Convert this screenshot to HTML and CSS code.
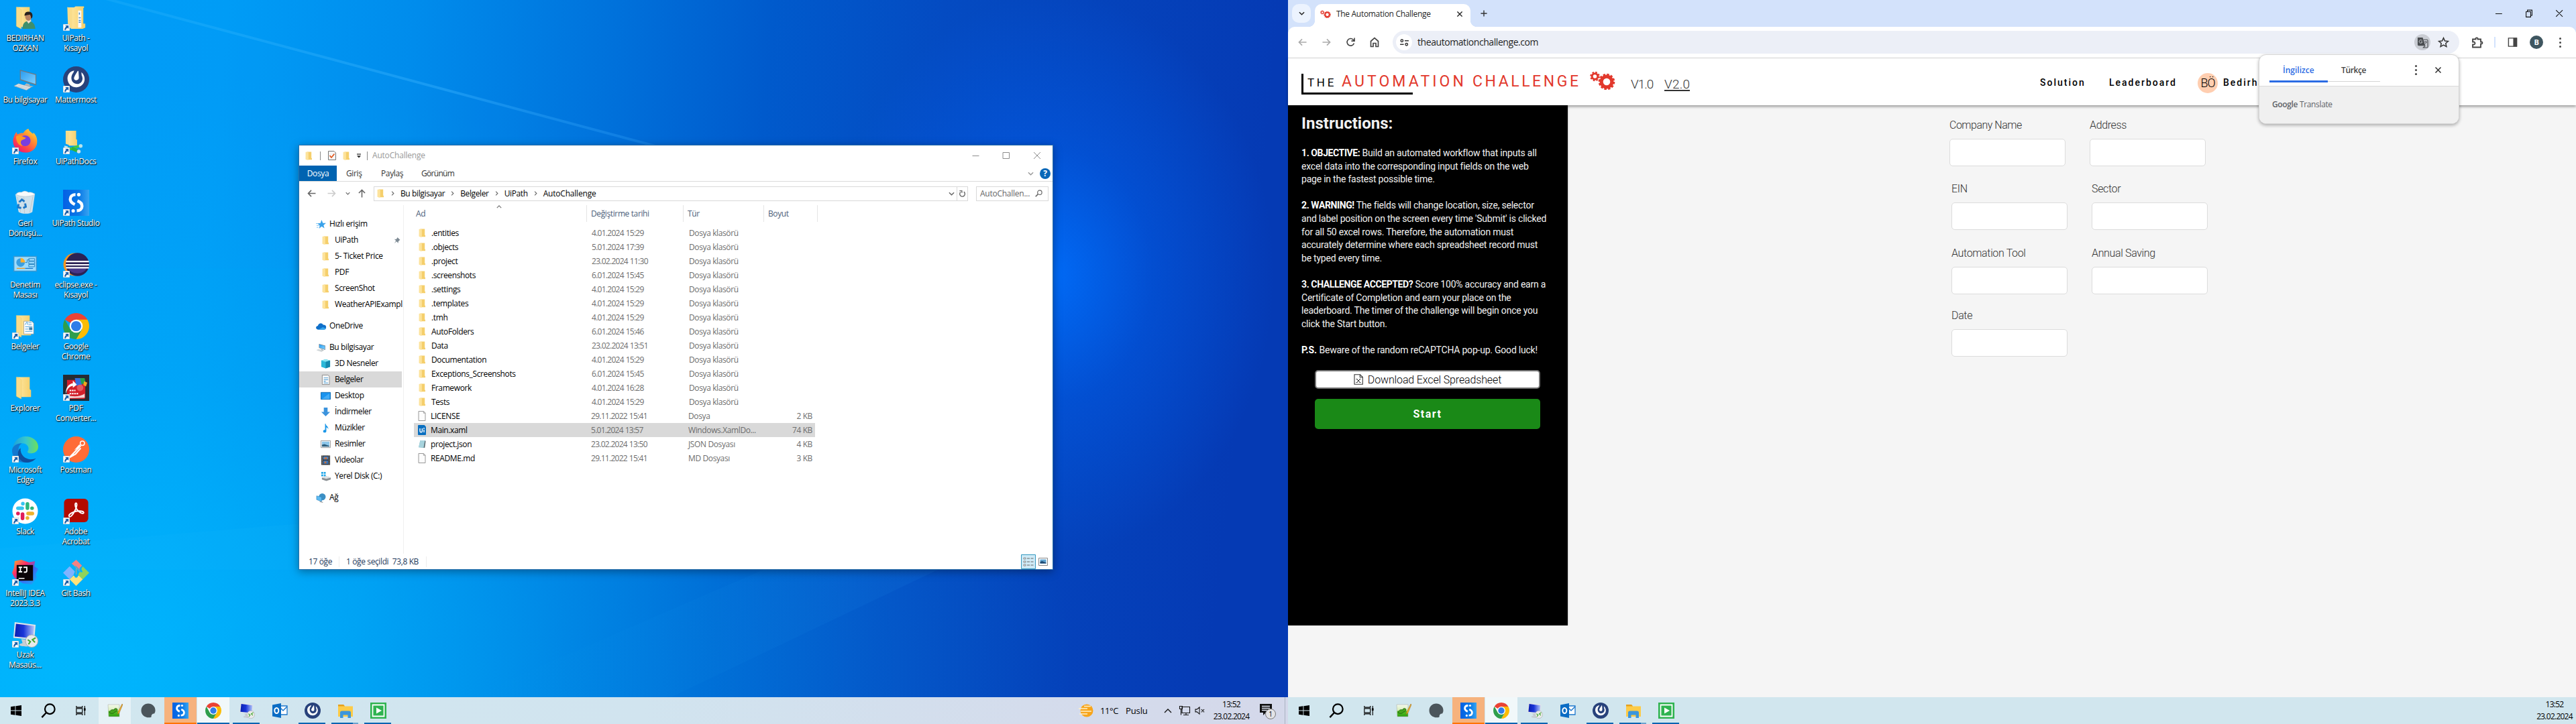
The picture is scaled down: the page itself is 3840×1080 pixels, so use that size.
FILE: index.html
```html
<!DOCTYPE html>
<html lang="tr">
<head>
<meta charset="utf-8">
<title>Desktop</title>
<link rel="stylesheet" href="styles.css">
</head>
<body>
<svg class="defs" width="0" height="0" aria-hidden="true">
  <defs>
    <linearGradient id="gFold" x1="0" x2="1"><stop offset="0" stop-color="#ffe9a6"/><stop offset="1" stop-color="#f6cf69"/></linearGradient>
    <linearGradient id="gScr" x1="0" y1="0" x2="1" y2="1"><stop offset="0" stop-color="#2a9df0"/><stop offset="1" stop-color="#7fd0ff"/></linearGradient>
    <linearGradient id="gFox" x1="1" y1="0" x2="0.2" y2="1"><stop offset="0" stop-color="#fff14a"/><stop offset=".35" stop-color="#ff9a2e"/><stop offset=".75" stop-color="#ff3f4c"/><stop offset="1" stop-color="#e3157d"/></linearGradient>
    <linearGradient id="gStu" x1="0" x2="1"><stop offset="0" stop-color="#0560e4"/><stop offset=".6" stop-color="#0a78e6"/><stop offset="1" stop-color="#37a5f2"/></linearGradient>
    <linearGradient id="gEdge" x1="0" y1="0.3" x2="1" y2="0.3"><stop offset="0" stop-color="#1ba0dc"/><stop offset=".5" stop-color="#36c6cf"/><stop offset="1" stop-color="#6fe05a"/></linearGradient>
    <linearGradient id="gRdp" x1="0" y1="0" x2="1" y2="0"><stop offset="0" stop-color="#0a1fb0"/><stop offset=".45" stop-color="#1a35d8"/><stop offset="1" stop-color="#b5c8fa"/></linearGradient>
    <linearGradient id="gGrn" x1="0" y1="0" x2="0" y2="1"><stop offset="0" stop-color="#f4f8ee"/><stop offset=".5" stop-color="#d8efb6"/><stop offset=".55" stop-color="#58c322"/><stop offset="1" stop-color="#2f9e12"/></linearGradient>
    <linearGradient id="gIj" x1="0" y1="0" x2="1" y2="1"><stop offset="0" stop-color="#f7b52c"/><stop offset=".35" stop-color="#fc2a6b"/><stop offset=".6" stop-color="#3a6cf4"/><stop offset="1" stop-color="#12b4f5"/></linearGradient>
  </defs>
  <symbol id="lnk" viewBox="0 0 10 10"><path d="M0 0h10v10H0z" fill="#fff" stroke="#9aa4ac" stroke-width=".8"/><path d="M3.2 2h5v5L6.600 5.500C5 6.300 4.300 7.300 4.200 8.700H2.200C2.200 6.300 3.200 4.800 4.800 3.800z" fill="#1c5fa8"/></symbol>
  <symbol id="fold" viewBox="0 0 10 13"><path d="M2.500.5H9.200V9.500L10 10.200V12.200H2z" fill="#f5cf6c"/><path d="M.6.8h3.200c.8 0 1 .5 1 1V12.800L1 12C.6 11.900.5 11.700.5 11.300z" fill="#fde39c"/></symbol>
  <symbol id="bigfold" viewBox="0 0 40 40"><path d="M7 3.500H27V22l2 1.500V34H14z" fill="url(#gFold)"/><path d="M6.500 3.500L13 6.500c.8.400 1 .8 1 1.700V37l-6.500-3.500c-.8-.4-1-.8-1-1.500z" fill="#f9dc8a" stroke="#efc75f" stroke-width=".5"/></symbol>
  <symbol id="userfold" viewBox="0 0 40 40"><use href="#bigfold" width="40" height="40"/><path d="M16 37c0-8 3-12 9-12s10 4 10.500 12z" fill="#3f8f6c"/><path d="M22 24l3 5 4-4-1-4h-5z" fill="#f0dcc8"/><ellipse cx="25" cy="18" rx="5" ry="6.500" fill="#b98462"/><path d="M19 17c0-6 4-6.500 7-6.300 4 .3 6 4 5 8-.5 1.500-1 2-2 2.500 0-3-.5-4.500-2-6-2.500.8-5 .8-8 1.800z" fill="#27201d"/></symbol>
  <symbol id="docsfold" viewBox="0 0 40 40"><path d="M7 4h10l2-1.500h13V5h-1v24h3v6l-4 2-18 0z" fill="url(#gFold)"/><path d="M23 9h5v26h-5z" fill="#f7f9fb"/><path d="M24 20h3M24 24h3M25 12v3M24 27h3" stroke="#4a8fcb" stroke-width="1.500"/><path d="M6.500 3.500L13 5.500c.8.400 1 .8 1 1.700V37l-6.500-3z" fill="#f9dc8a"/></symbol>
  <symbol id="netfold" viewBox="0 0 40 40"><path d="M4 4h16v13l1.500 1V27H9z" fill="url(#gFold)"/><path d="M4 4l5 2v20l-5-2z" fill="#f9dc8a"/><path d="M2 30l10 2 14-5" stroke="#3fc84a" stroke-width="4" fill="none"/><path d="M13 31l9 4" stroke="#2fb43e" stroke-width="5"/><circle cx="27" cy="27.500" r="2.800" fill="#b6e3ea"/><circle cx="24" cy="36" r="2.800" fill="#cfe3e6"/><path d="M2 27l5 1v4l-5-1z" fill="#bfe5f0"/></symbol>
  <symbol id="docfold" viewBox="0 0 40 40"><use href="#bigfold" width="40" height="40"/><path d="M18 12.500H30L33 15.500V32H18z" fill="#fff" stroke="#8a8f93" stroke-width=".7"/><path d="M20 18l2-4h1.500v4M25 15h5M25 18h5M20 21h11M20 28h11M20 24.500h5" stroke="#4b9fd8" stroke-width="1" fill="none"/><path d="M26 22h5v4h-5z" fill="#3d7ea8"/></symbol>
  <symbol id="pc" viewBox="0 0 40 40"><path d="M12 5L37 12V29L12 21z" fill="#6d7a84"/><path d="M13.300 7L35.700 13.200V27L13.300 19.800z" fill="url(#gScr)"/><path d="M22 26l5 1.500v2l6 1-6 2-9-3z" fill="#aeb6bb"/><path d="M3 30L10 26.500 29 32 22 36.500z" fill="#e4e8ea" stroke="#9aa3a9" stroke-width=".6"/><path d="M6 30l18 5M9 28.500l17 5" stroke="#a8b0b5" stroke-width=".7"/></symbol>
  <symbol id="mm" viewBox="0 0 40 40"><circle cx="20" cy="20" r="20" fill="#28427b"/><path d="M17 6.500C9.500 8 5.800 14 7 21c1.300 7 7 11.500 14 11 7-.6 12-6 12-12.500 0-4.500-1.800-8-5-10.500l.4 4.500c2.300 4.300 1.600 8.800-1.600 11.500-3.500 2.700-8.500 2.500-11.500-.6-4-4.300-3-11 .7-15.200z" fill="#fff"/><path d="M22.800 7c.4 0 .7.2.8 1l.6 9c.2 3-2 4.500-4.400 4.200-2.400-.3-3.800-2.500-2.700-4.900 1.400-3 3.600-6.600 5.200-9 .1-.2.3-.3.500-.3z" fill="#fff"/></symbol>
  <symbol id="fox" viewBox="0 0 40 40"><path d="M3 13c1-3 2-5 4-7 0 2 .6 3 1.500 3.800C12 8 14 7.500 17 7.800 19 4 22 2 25 1c1 4 4 5 7 8 .5-.6.600-1.500.4-2.300C38 12 39 18 38 24c-1.500 8-8.500 13.500-17.500 13.500C10 37.500 2 30 1.500 21c-.1-3 .3-5.500 1.500-8z" fill="url(#gFox)"/><circle cx="20" cy="19.500" r="8.300" fill="#7a3ee0"/><path d="M6 13c4-3 8-2 10 0 2 1 4 .8 5 2-1 2.500-5 2-7 4.500-1.500 2.500-.5 6 2.500 8-6-.5-10-5-10.500-14.500z" fill="#ff9824"/></symbol>
  <symbol id="bin" viewBox="0 0 40 40"><path d="M5 7l30-1-4 28c-4 3.500-16 3.500-21 0z" fill="#dfe6ea" opacity=".92"/><path d="M6 7c3-5 8-2 10-4 4-2 7 0 9 1 4-1 8 1 10 3-5 4-23 5-29 0z" fill="#f8fafb" stroke="#b4bfc6" stroke-width=".6"/><path d="M8 11l5 23M18 12l1 24M32 10l-5 25" stroke="#bcc7cd" stroke-width="1" fill="none"/><path d="M11 19l4-4 4 3M20 21l1 5-4 2M14 28l-5-1 1-5" fill="none" stroke="#1d78c8" stroke-width="3"/></symbol>
  <symbol id="stu" viewBox="0 0 40 40"><path d="M0 0h40v40H0z" fill="url(#gStu)"/><path d="M19 7.500c-5 0-8 3-8 7s3 6 7 8M22 17c4 1.500 7 4 7 8s-3 7-8 7" fill="none" stroke="#fff" stroke-width="4.600"/><circle cx="24" cy="7.500" r="2.700" fill="#fff"/><circle cx="15.500" cy="32.300" r="2.600" fill="#fff"/></symbol>
  <symbol id="cpl" viewBox="0 0 40 40"><path d="M2 7h36v24H2z" fill="#3c97cf"/><path d="M3.500 8.500h33v21h-33z" fill="#9bdcff"/><circle cx="13" cy="17" r="6.500" fill="#3a9fe0"/><path d="M13 17V10a7 7 0 0 1 7 7z" fill="#ffb02e"/><path d="M20 17h3v-4h4M25.500 11h9v3.500h-9zM25.500 15.500h9V19h-9zM25.500 20h9v3.500h-9z" stroke="#2b87c2" fill="none"/><path d="M7 26h13" stroke="#f29a1f" stroke-width="1.300"/><path d="M20 26h12" stroke="#1d78c8" stroke-width="1.300"/></symbol>
  <symbol id="ecl" viewBox="0 0 40 40"><circle cx="18" cy="20" r="17.500" fill="#f7941e"/><circle cx="22" cy="20" r="17.800" fill="#2c2255"/><path d="M8 26h28a15 12 0 0 1-28 0z" fill="#473788"/><path d="M4.500 15.500h35M4.200 20.500h35.600M4.500 25h35" stroke="#fff" stroke-width="2.200"/></symbol>
  <symbol id="chr" viewBox="0 0 40 40"><path d="M20 20L2.700 10A20 20 0 0 1 37.300 10z" fill="#ea4335"/><path d="M20 10H37.300A20 20 0 0 1 20 40L28.700 25z" fill="#fbbc05"/><path d="M2.700 10L11.300 25 28.700 25 20 40A20 20 0 0 1 2.700 10z" fill="#2f9e4c"/><circle cx="20" cy="20" r="10" fill="#fff"/><circle cx="20" cy="20" r="7.800" fill="#2f7de9"/></symbol>
  <symbol id="pdf" viewBox="0 0 40 40"><path d="M0 0h40v40H0z" fill="#262a33"/><path d="M6 8h22l6 5v21c0 2-1 3-3 3H9c-2 0-3-1-3-3z" fill="#d3202b"/><path d="M6 31c8 3 20 3 27-2v6l-25 1z" fill="#f0d5d5"/><path d="M18 5l9 0 2 10-9 2z" fill="#2f6fe0"/><path d="M26 5h7l2 9h-7z" fill="#22a04a"/><path d="M32 10l5 2-2 6-4-2z" fill="#f2a51f"/><path d="M4 30C4 20 8 14 15 13V9l6 6-6 5v-3c-6 1-9 5-11 13z" fill="#fff"/><circle cx="26" cy="20" r="5" fill="#e25a60"/><path d="M10 24h9M10 29h14" stroke="#fff" stroke-width="2" stroke-dasharray="2.500 1"/></symbol>
  <symbol id="edge" viewBox="0 0 40 40"><path d="M1 19C2 8 10 0 20.500 0 32 0 40 7.500 40 16c0 6-5 10-10.500 10-4.500 0-6-1.500-6-2.500 0-1 1.700-2 1.700-5 0-4.500-4.500-8-10-8C8 10.500 3 14 1 19z" fill="url(#gEdge)"/><path d="M0 22C0 15 7 10.500 15 10.500c-4 2.500-6 7-5 13C11.500 33 19 38 27 39 12 43 0 34 0 22z" fill="#1378cf"/><path d="M13 18c-1 10 7 17 15 17 4 0 7-1 8.500-1.500C33 38 27 40 22 40 12 39 8.500 31 9 25c.2-3 2-6 4-7z" fill="#0f4f9e"/></symbol>
  <symbol id="post" viewBox="0 0 40 40"><circle cx="20" cy="20" r="20" fill="#ff6c37"/><circle cx="29.500" cy="10.500" r="3.300" fill="none" stroke="#fff" stroke-width="1.500"/><path d="M27 14L10 32l9-5 8-9" fill="none" stroke="#fff" stroke-width="2.200"/><path d="M17 21l8-9 2 4z" fill="#fff"/></symbol>
  <symbol id="slack" viewBox="0 0 40 40"><circle cx="20" cy="20" r="19.500" fill="#fff"/><g stroke-width="5.600" stroke-linecap="round"><path d="M9 15.500h6.500M16.500 8.500v.1" stroke="#36c5f0"/><path d="M23.500 9v6.500M30.500 15.500h.1" stroke="#2eb67d"/><path d="M24.500 23.500H31M23.500 30.500v.1" stroke="#ecb22e"/><path d="M16 24.500V31M9 23.500h.1" stroke="#e01e5a"/></g></symbol>
  <symbol id="acro" viewBox="0 0 40 40"><rect x="1.500" y="1" width="37" height="36" rx="6" fill="#b30b00"/><path d="M9 27c0-3 7-6 12-7 5-.6 10-.5 10.500 2 .3 2-3 2-6-.5-4-3-7-8-7-11.500 0-3 2.500-3.500 2.500 0 0 5-5 14-8 17-2 2-4 2-4 0z" fill="none" stroke="#fff" stroke-width="2"/></symbol>
  <symbol id="ij" viewBox="0 0 40 40"><path d="M4 2l10-2 12 4 9-2-1 8 6 4-4 8 2 6-8 10-14-2-12-8L0 20l3-8z" fill="url(#gIj)"/><path d="M7 8h25v24H7z" fill="#0b0408"/><path d="M10 11.500h5.500M12.700 11.500v7M10 18.500h5.500M17.500 11.500h5v5.500q0 2-2 2h-2.500" stroke="#fff" stroke-width="1.900" fill="none"/><path d="M10 28.500h9" stroke="#fff" stroke-width="1.500"/></symbol>
  <symbol id="git" viewBox="0 0 40 40"><path d="M20 0l9 9-4 4 1 3-6-6-3-1-4-3z" fill="#f58282"/><path d="M0 20L10 10l8 8-2 5-6 7z" fill="#80b3ff"/><path d="M30 10l10 10-10 10-7-7 2-4 5 0-2-5z" fill="#8ed35a"/><path d="M20 40L10 30l6-6 4 3 4-3 6 6z" fill="#ffe27a"/><path d="M17 9l9 9M20 13v12" stroke="#c9a088" stroke-width="1"/><circle cx="20" cy="25" r="2.500" fill="#00b3fa"/></symbol>
  <symbol id="rdp" viewBox="0 0 40 40"><path d="M4 1L36 5 34 28 2 25z" fill="#dfe3e8"/><path d="M6 3.500L34 7 32 26 4 23z" fill="url(#gRdp)"/><path d="M14 27l10 1 1 6c4 1 6 3 2 4-6 1-16 0-16-2 0-2 3-2 5-3z" fill="#c8ced4"/><circle cx="30" cy="30" r="9.500" fill="#e9eaeb" stroke="#a9adb1"/><path d="M24 28l4 3-3 4M36 25l-5 3 4 4" stroke="#43a82c" stroke-width="2" fill="none"/></symbol>

  <symbol id="win" viewBox="0 0 16 16"><path d="M0 2.200L6.500 1.300V7.600H0zM7.400 1.200L16 0V7.600H7.400zM0 8.400H6.500V14.700L0 13.800zM7.400 8.400H16V16L7.400 14.800z"/></symbol>
  <symbol id="find" viewBox="0 0 24 24"><circle cx="14.500" cy="9.500" r="8" fill="none" stroke="#000" stroke-width="2.400"/><path d="M9 15L1.500 23" stroke="#000" stroke-width="2.600"/></symbol>
  <symbol id="task" viewBox="0 0 18 18"><path d="M1.500 1v2.500h10V1M1.500 17v-2.500h10V17M1.500 5.500h10v7h-10zM15.500 1v16" fill="none" stroke="#000" stroke-width="1.300"/><path d="M14 5h3v4h-3z"/></symbol>
  <symbol id="npp" viewBox="0 0 24 24"><path d="M2 3h17v18H3z" fill="url(#gGrn)" stroke="#a4aaa0" stroke-width=".5"/><path d="M4 15c1-4 4-5 7-4 0-3 5-3 5 0 0 2-2 3-4 3-2 3-5 3-8 1z" fill="#46a51d" stroke="#1d5a10" stroke-width=".8"/><path d="M23 2l-6 12-1 4 3-3L24 3z" fill="#f5b52c" stroke="#8a5a1a" stroke-width=".5"/></symbol>
  <symbol id="blob" viewBox="0 0 24 24"><path d="M12 1.500c6 0 10.500 4.500 10.500 10 0 2-.5 3.500-1.500 5-2-.5-4.500 1-4.500 4.500v.8C9 24 1.500 19.500 1.500 12 1.500 6 6 1.500 12 1.500z" fill="#4b555b"/></symbol>
  <symbol id="olk" viewBox="0 0 24 24"><path d="M11 5h12v13H11z" fill="#fff" stroke="#1c77cc" stroke-width="1.300"/><path d="M12 7l5 5 6-6" fill="none" stroke="#1c77cc" stroke-width="1.500"/><path d="M1 3.500L14 1v22L1 20.500z" fill="#0a6cc4"/><ellipse cx="7.300" cy="12" rx="3" ry="4" fill="none" stroke="#fff" stroke-width="2"/></symbol>
  <symbol id="exp" viewBox="0 0 24 24"><path d="M1 3h8l2 2.500h12V21H1z" fill="#fdcb47"/><path d="M1 3h8l2 2.500H1z" fill="#e5a01d"/><path d="M4 23v-8q0-2.500 2.500-2.500h11Q20 12.500 20 15v8h-4.500v-4.500h-7V23z" fill="#3c96dc"/></symbol>
  <symbol id="asst" viewBox="0 0 24 24"><path d="M0 0h24v24H0z" fill="#2fb350"/><path d="M3.500 3.500h17v17h-17z" fill="none" stroke="#fff" stroke-width="1.800"/><path d="M9 7.500l8 4.500-8 4.500z" fill="#fff"/></symbol>
  <symbol id="gears" viewBox="0 0 38 28"><g fill="none" stroke="#e2382c"><circle cx="7.500" cy="8" r="4.300" stroke-width="3"/><circle cx="7.500" cy="8" r="6.300" stroke-width="2" stroke-dasharray="2.600 2.350"/><circle cx="25" cy="16" r="7.900" stroke-width="5.200"/><circle cx="25" cy="16" r="11" stroke-width="2.600" stroke-dasharray="3.400 2.360"/></g></symbol>
  <symbol id="page" viewBox="0 0 12 15"><path d="M1 .5h7.500L11 3v11.500H1z" fill="#fcfcfc" stroke="#8d8d8d" stroke-width=".9"/><path d="M8.300.7V3.200H11" fill="none" stroke="#8d8d8d" stroke-width=".8"/></symbol>
  <symbol id="chev" viewBox="0 0 10 6"><path d="M1 1l4 4 4-4" fill="none" stroke="currentColor" stroke-width="1.600"/></symbol>
  <symbol id="x" viewBox="0 0 10 10"><path d="M.5.5l9 9M9.500.5l-9 9" fill="none" stroke="currentColor" stroke-width="1.700"/></symbol>
  <symbol id="arr" viewBox="0 0 14 12"><path d="M13.500 6H1.500M6.500 1L1.500 6l5 5" fill="none" stroke="currentColor" stroke-width="1.700"/></symbol>
</svg>

<main class="screens">
<section class="monitor">
  <div class="desktop">
    <svg class="wall" viewBox="0 0 1920 1080" preserveAspectRatio="none" aria-hidden="true">
      <defs>
        <linearGradient id="ray1" gradientUnits="userSpaceOnUse" x1="150" y1="0" x2="1000" y2="220"><stop offset="0" stop-color="#4cc4ff" stop-opacity=".15"/><stop offset=".6" stop-color="#3db4ff" stop-opacity=".4"/><stop offset="1" stop-color="#2f9cf5" stop-opacity=".3"/></linearGradient>
        <linearGradient id="ray2" x1="0" x2="1"><stop offset="0" stop-color="#20c4ff" stop-opacity="0"/><stop offset="1" stop-color="#2fb0ff" stop-opacity=".07"/></linearGradient>
      </defs>
      <path d="M150 -6L1000 222V226L150 -2z" fill="url(#ray1)"/>
      <path d="M150 0L1000 225V400L0 400V0z" fill="#18a4ff" opacity=".04"/>
      <path d="M0 818L460 780V850L0 850z" fill="#2fc8ff" opacity=".06"/>
      <path d="M700 1040L1140 849H1400L1000 1040z" fill="url(#ray2)"/>
    </svg>
    <div class="icons">
      <div class="ico"><i><svg><use href="#userfold"/></svg></i><b>BEDIRHAN<br>OZKAN</b></div>
      <div class="ico"><i><svg><use href="#pc"/></svg></i><b>Bu bilgisayar</b></div>
      <div class="ico"><i><svg><use href="#fox"/></svg><svg class="sc"><use href="#lnk"/></svg></i><b>Firefox</b></div>
      <div class="ico"><i><svg><use href="#bin"/></svg></i><b>Geri<br>Dönüşü...</b></div>
      <div class="ico"><i><svg><use href="#cpl"/></svg></i><b>Denetim<br>Masası</b></div>
      <div class="ico"><i><svg><use href="#docfold"/></svg><svg class="sc"><use href="#lnk"/></svg></i><b>Belgeler</b></div>
      <div class="ico"><i><svg><use href="#bigfold"/></svg></i><b>Explorer</b></div>
      <div class="ico"><i><svg><use href="#edge"/></svg><svg class="sc"><use href="#lnk"/></svg></i><b>Microsoft<br>Edge</b></div>
      <div class="ico"><i><svg><use href="#slack"/></svg><svg class="sc"><use href="#lnk"/></svg></i><b>Slack</b></div>
      <div class="ico"><i><svg><use href="#ij"/></svg><svg class="sc"><use href="#lnk"/></svg></i><b>IntelliJ IDEA<br>2023.3.3</b></div>
      <div class="ico"><i><svg><use href="#rdp"/></svg><svg class="sc"><use href="#lnk"/></svg></i><b>Uzak<br>Masaüs...</b></div>
      <div class="ico"><i><svg><use href="#docsfold"/></svg><svg class="sc"><use href="#lnk"/></svg></i><b>UiPath -<br>Kısayol</b></div>
      <div class="ico"><i><svg><use href="#mm"/></svg><svg class="sc"><use href="#lnk"/></svg></i><b>Mattermost</b></div>
      <div class="ico"><i><svg><use href="#netfold"/></svg><svg class="sc"><use href="#lnk"/></svg></i><b>UiPathDocs</b></div>
      <div class="ico"><i><svg><use href="#stu"/></svg><svg class="sc"><use href="#lnk"/></svg></i><b>UiPath Studio</b></div>
      <div class="ico"><i><svg><use href="#ecl"/></svg><svg class="sc"><use href="#lnk"/></svg></i><b>eclipse.exe -<br>Kısayol</b></div>
      <div class="ico"><i><svg><use href="#chr"/></svg><svg class="sc"><use href="#lnk"/></svg></i><b>Google<br>Chrome</b></div>
      <div class="ico"><i><svg><use href="#pdf"/></svg><svg class="sc"><use href="#lnk"/></svg></i><b>PDF<br>Converter...</b></div>
      <div class="ico"><i><svg><use href="#post"/></svg><svg class="sc"><use href="#lnk"/></svg></i><b>Postman</b></div>
      <div class="ico"><i><svg><use href="#acro"/></svg><svg class="sc"><use href="#lnk"/></svg></i><b>Adobe<br>Acrobat</b></div>
      <div class="ico"><i><svg><use href="#git"/></svg><svg class="sc"><use href="#lnk"/></svg></i><b>Git Bash</b></div>
    </div>

    <section class="window">
      <header class="titlebar">
        <svg class="f"><use href="#fold"/></svg><span class="vsep s1"></span>
        <svg class="chk" viewBox="0 0 12 14"><path d="M.5.5H9L11.500 3V13.500H.5z" fill="#f6f6f6" stroke="#777"/><path d="M2.500 7l2.500 3 4.500-5.500" fill="none" stroke="#e0561b" stroke-width="1.700"/></svg>
        <svg class="f f2"><use href="#fold"/></svg>
        <svg class="qa" viewBox="0 0 8 7"><path d="M1 1h6" stroke="#222" stroke-width="1.200"/><path d="M1 3.200h6L4 6.500z" fill="#222"/></svg>
        <span class="vsep s2"></span><span class="wtitle">AutoChallenge</span>
        <svg class="wc" viewBox="0 0 102 14"><path d="M.5 7.500h10M46 2.500h9.500v9H46zM92 2l10 10M102 2L92 12" fill="none" stroke="#8c8c8c"/></svg>
      </header>
      <nav class="ribbon"><span class="dosya">Dosya</span><span class="t1">Giriş</span><span class="t2">Paylaş</span><span class="t3">Görünüm</span>
        <svg class="rchev"><use href="#chev"/></svg><span class="help">?</span></nav>
      <div class="addr">
        <svg class="a1"><use href="#arr"/></svg><svg class="a2"><use href="#arr"/></svg><svg class="a3"><use href="#chev"/></svg><svg class="a4"><use href="#arr"/></svg>
        <div class="path"><svg class="pf"><use href="#fold"/></svg><svg class="sep p0"><use href="#chev"/></svg><span>Bu bilgisayar</span><svg class="sep"><use href="#chev"/></svg><span>Belgeler</span><svg class="sep"><use href="#chev"/></svg><span>UiPath</span><svg class="sep"><use href="#chev"/></svg><span class="ac">AutoChallenge</span>
          <svg class="pchev"><use href="#chev"/></svg><span class="ref"><svg viewBox="0 0 12 12"><path d="M3.200 3.200A4.200 4.200 0 1 0 8.500 2.900M1.500 1.200h3.800v3.500" fill="none" stroke="#666" stroke-width="1.500"/></svg></span></div>
        <div class="search"><span>AutoChallen...</span><svg viewBox="0 0 12 12"><circle cx="7.500" cy="4.500" r="3.500" fill="none" stroke="#666" stroke-width="1.300"/><path d="M5 7L.8 11.200" stroke="#666" stroke-width="1.800"/></svg></div>
      </div>
      <div class="panes">
        <ul class="tree">
          <li><svg viewBox="0 0 16 16"><path d="M9 1l2 5h5l-4 3.500 1.500 5L9 11.500 5 15l1-5-4-3.500h5z" fill="#3aa2ea"/><path d="M0 7h4M1 10h4M1 13h3" stroke="#7cc4f4"/></svg>Hızlı erişim</li>
          <li class="k"><svg class="f"><use href="#fold"/></svg>UiPath<svg class="pin" viewBox="0 0 12 12"><path d="M6.500.5l5 5-1.500.5-2 2.500V11L5 8 .8 11.500 4 7 1 4l3 .2L6 2z" fill="#7d8a94"/></svg></li>
          <li class="k"><svg class="f"><use href="#fold"/></svg>5- Ticket Price</li>
          <li class="k"><svg class="f"><use href="#fold"/></svg>PDF</li>
          <li class="k"><svg class="f"><use href="#fold"/></svg>ScreenShot</li>
          <li class="k"><svg class="f"><use href="#fold"/></svg>WeatherAPIExampl</li>
          <li class="g"><svg viewBox="0 0 16 16"><path d="M4 13.500C-1 13.500-1 8 3 7.500 4 3 9.500 2 11.500 6c4-.5 5.500 3 4.300 5.500-.6 1.400-1.500 2-3 2z" fill="#0f6fc9"/><path d="M4 13.500l7-4 4.800 2.300c-.6 1.300-1.500 1.700-3 1.700z" fill="#35a6ee"/></svg>OneDrive</li>
          <li class="g"><svg viewBox="0 0 40 40"><use href="#pc"/></svg>Bu bilgisayar</li>
          <li class="k"><svg viewBox="0 0 16 16"><path d="M1 3l7-2 7 2v10l-7 2.500L1 13z" fill="#2bb8d8"/><path d="M1 3l7-2 7 2-7 2z" fill="#8ae6f2"/><path d="M8 5l7-2v10l-7 2.500z" fill="#1489ae"/></svg>3D Nesneler</li>
          <li class="k on"><svg viewBox="0 0 16 16"><path d="M2.500.5h9l2.500 2v13H2.500z" fill="#f7f7f7" stroke="#8a8a8a"/><path d="M5 5h7M5 8h7M5 10.500h3M5 13h7" stroke="#4d9ed6" stroke-width="1.200"/></svg>Belgeler</li>
          <li class="k"><svg viewBox="0 0 16 16"><path d="M.5 2.500h15v11H.5z" fill="#1a93ee" stroke="#0d6ab0"/><path d="M2 13L14 4v9z" fill="#41acf7"/></svg>Desktop</li>
          <li class="k"><svg viewBox="0 0 16 16"><path d="M5 1h6v7h4l-7 7-7-7h4z" fill="#3b93dd"/></svg>İndirmeler</li>
          <li class="k"><svg viewBox="0 0 16 16"><path d="M8 1c0 4 5 4 4 9-.5-2-2-3-3-3v6c0 3-5 3-5 .5S6 11 7 11V1z" fill="#1b97e8"/></svg>Müzikler</li>
          <li class="k"><svg viewBox="0 0 16 16"><path d="M.5 2.500h15v11H.5z" fill="#fff" stroke="#999"/><path d="M2 4h12v8H2z" fill="#8cc6ea"/><path d="M2 9l4-1 8 3v1H2z" fill="#2f5f7d"/></svg>Resimler</li>
          <li class="k"><svg viewBox="0 0 16 16"><path d="M1 .5h14v15H1z" fill="#333"/><path d="M4 2h8v5H4z" fill="#4d86c9"/><path d="M4 8.500h8V14H4z" fill="#3b75b8"/><path d="M6 3.500h4v3H6zM6 10h3v3H6z" fill="#c6703a"/><path d="M2.500 1v14M13.500 1v14" stroke="#ddd" stroke-dasharray="1.200 1.200"/></svg>Videolar</li>
          <li class="k"><svg viewBox="0 0 16 16"><path d="M1 1h3v3H1zM5 1h3v3H5zM1 5h3v3H1zM5 5h3v3H5z" fill="#1ea5e8"/><path d="M2 10l7-2 7 2v3l-7 2.500L2 13z" fill="#8b9094"/><path d="M2 10l7-2 7 2-7 2z" fill="#dfe2e4"/></svg>Yerel Disk (C:)</li>
          <li class="g"><svg viewBox="0 0 16 16"><circle cx="10" cy="6.500" r="5.500" fill="#3c8fc4"/><path d="M1 5l8 2v7l-8-3z" fill="#5dbaf2" stroke="#2a7fb8" stroke-width=".6"/><path d="M6 14l5 1.500" stroke="#999" stroke-width="1.200"/></svg>Ağ</li>
        </ul>
        <div class="files">
          <div class="cols"><span>Ad</span><span>Değiştirme tarihi</span><span>Tür</span><span>Boyut</span><svg class="sort"><use href="#chev"/></svg></div>
          <div class="row"><svg class="f"><use href="#fold"/></svg><span>.entities</span><em>4.01.2024 15:29</em><u>Dosya klasörü</u></div>
          <div class="row"><svg class="f"><use href="#fold"/></svg><span>.objects</span><em>5.01.2024 17:39</em><u>Dosya klasörü</u></div>
          <div class="row"><svg class="f"><use href="#fold"/></svg><span>.project</span><em>23.02.2024 11:30</em><u>Dosya klasörü</u></div>
          <div class="row"><svg class="f"><use href="#fold"/></svg><span>.screenshots</span><em>6.01.2024 15:45</em><u>Dosya klasörü</u></div>
          <div class="row"><svg class="f"><use href="#fold"/></svg><span>.settings</span><em>4.01.2024 15:29</em><u>Dosya klasörü</u></div>
          <div class="row"><svg class="f"><use href="#fold"/></svg><span>.templates</span><em>4.01.2024 15:29</em><u>Dosya klasörü</u></div>
          <div class="row"><svg class="f"><use href="#fold"/></svg><span>.tmh</span><em>4.01.2024 15:29</em><u>Dosya klasörü</u></div>
          <div class="row"><svg class="f"><use href="#fold"/></svg><span>AutoFolders</span><em>6.01.2024 15:46</em><u>Dosya klasörü</u></div>
          <div class="row"><svg class="f"><use href="#fold"/></svg><span>Data</span><em>23.02.2024 13:51</em><u>Dosya klasörü</u></div>
          <div class="row"><svg class="f"><use href="#fold"/></svg><span>Documentation</span><em>4.01.2024 15:29</em><u>Dosya klasörü</u></div>
          <div class="row"><svg class="f"><use href="#fold"/></svg><span>Exceptions_Screenshots</span><em>6.01.2024 15:45</em><u>Dosya klasörü</u></div>
          <div class="row"><svg class="f"><use href="#fold"/></svg><span>Framework</span><em>4.01.2024 16:28</em><u>Dosya klasörü</u></div>
          <div class="row"><svg class="f"><use href="#fold"/></svg><span>Tests</span><em>4.01.2024 15:29</em><u>Dosya klasörü</u></div>
          <div class="row"><svg class="d"><use href="#page"/></svg><span>LICENSE</span><em>29.11.2022 15:41</em><u>Dosya</u><s>2 KB</s></div>
          <div class="row on"><svg class="d" viewBox="0 0 12 15"><path d="M0 1q0-1 1-1h8.500L12 2.500V14q0 1-1 1H1q-1 0-1-1z" fill="#0a6fc0"/><path d="M3 5v4q0 1.800 1.700 1.800T6.400 9V5M9 7v4" fill="none" stroke="#fff" stroke-width="1.400"/><circle cx="9" cy="5" r=".9" fill="#fff"/></svg><span>Main.xaml</span><em>5.01.2024 13:57</em><u>Windows.XamlDo...</u><s>74 KB</s></div>
          <div class="row"><svg class="d j" viewBox="0 0 14 15"><path d="M4 1h9l-1.500 12-1 1-9-1z" fill="#7fb6c4"/><path d="M4 1h8L10 13l-9 0z" fill="#a7d3dd"/><path d="M12 2l1.500 0L12 14l-2-.5z" fill="#5c6a70"/></svg><span>project.json</span><em>23.02.2024 13:50</em><u>JSON Dosyası</u><s>4 KB</s></div>
          <div class="row"><svg class="d"><use href="#page"/></svg><span>README.md</span><em>29.11.2022 15:41</em><u>MD Dosyası</u><s>3 KB</s></div>
        </div>
      </div>
      <footer class="status"><span>17 öğe</span><span>1 öğe seçildi&nbsp; 73,8 KB</span>
        <svg class="v1" viewBox="0 0 22 22"><path d="M.5.5h21v21H.5z" fill="#cfeaf6" stroke="#3297c0"/><path d="M4 5h3v2H4zM4 10h3v2H4zM4 15h3v2H4z" fill="#fff" stroke="#666" stroke-width=".7"/><path d="M9 6h4M14.500 6h4M9 11h4M14.500 11h4M9 16h4M14.500 16h4" stroke="#666"/></svg>
        <svg class="v2" viewBox="0 0 14 12"><path d="M.5.5h13v11H.5z" fill="#fff" stroke="#888"/><path d="M2.500 2.500h9v6h-9z" fill="#5ea3d0"/><path d="M2.500 6l3-1 6 2.500v1h-9z" fill="#1f4a73"/></svg>
      </footer>
    </section>
  </div>
  <footer class="taskbar left">
    <span class="tb s"><svg class="w16"><use href="#win"/></svg></span><span class="tb s"><svg class="w22"><use href="#find"/></svg></span><span class="tb s tv"><svg class="w18"><use href="#task"/></svg></span>
    <span class="tb hov"><svg><use href="#npp"/></svg></span><span class="tb"><svg><use href="#blob"/></svg></span><span class="tb att"><svg viewBox="0 0 40 40"><use href="#stu"/></svg></span><span class="tb act"><svg viewBox="0 0 40 40"><use href="#chr"/></svg></span><span class="tb run"><svg viewBox="0 0 40 40"><use href="#rdp"/></svg></span><span class="tb"><svg><use href="#olk"/></svg></span><span class="tb run"><svg viewBox="0 0 40 40"><use href="#mm"/></svg></span><span class="tb run two"><svg><use href="#exp"/></svg></span><span class="tb run"><svg><use href="#asst"/></svg></span>
    <div class="tray">
      <svg class="wx" viewBox="0 0 22 22"><circle cx="12" cy="11" r="9.500" fill="#f7a51c"/><path d="M0 8h13M3 12h16M1 16h12M8 4.500h10" stroke="#fff0c8" stroke-width="1.500"/></svg>
      <span class="deg">11°C</span><span class="puslu">Puslu</span>
      <svg class="up" viewBox="0 0 12 8"><path d="M1 7l5-5 5 5" fill="none" stroke="#111" stroke-width="1.300"/></svg>
      <svg class="net" viewBox="0 0 16 16"><path d="M4 2.500h11.500v9H4zM.5 1.500h4v4h-4zM10 11.500v3M6 14.500h8M2.500 5.500v9" fill="none" stroke="#111" stroke-width="1.100"/></svg>
      <svg class="spk" viewBox="0 0 16 14"><path d="M1 5v4h2.500L7.500 12.500v-11L3.500 5zM10.500 5l4.500 4.500M15 5l-4.500 4.500" fill="none" stroke="#111" stroke-width="1.100"/></svg>
      <span class="clock">13:52<br>23.02.2024</span>
      <span class="note"><svg viewBox="0 0 18 17"><path d="M0 0h18v13H9l-4 4v-4H0z" fill="#111"/><path d="M3 3.500h12M3 6.500h12M3 9.500h8" stroke="#dfe4f0" stroke-width="1.300"/></svg><b>1</b></span>
    </div>
  </footer>
</section>

<section class="monitor">
  <div class="browser">
    <div class="tabs">
      <span class="tsearch"><svg><use href="#chev"/></svg></span>
      <div class="tab"><svg class="fav"><use href="#gears"/></svg><span>The Automation Challenge</span><svg class="tx"><use href="#x"/></svg></div>
      <svg class="plus" viewBox="0 0 12 12"><path d="M6 .5v11M.5 6h11" stroke="#333" stroke-width="1.700"/></svg>
      <svg class="bwc" viewBox="0 0 104 12"><path d="M0 6.500h10M46.500 3.500h7v8h-7zM48.500 3.500V1h7v8h-2M92 1l10 10M102 1L92 11" fill="none" stroke="#111" stroke-width="1.100"/></svg>
    </div>
    <div class="toolbar">
      <svg class="b1"><use href="#arr"/></svg><svg class="b1 b2"><use href="#arr"/></svg>
      <svg class="b3" viewBox="0 0 14 14"><path d="M12.300 8.500A5.700 5.700 0 1 1 11 2.900L12.500 4.500M13 0v5H8" fill="none" stroke="#444" stroke-width="1.700"/></svg>
      <svg class="b4" viewBox="0 0 14 15"><path d="M1.500 6L7 1.200 12.500 6v8H9V9H5v5H1.500z" fill="none" stroke="#444" stroke-width="1.700"/></svg>
      <div class="omni"><span class="site"><svg viewBox="0 0 14 12"><path d="M7.500 3H14M0 9h6" stroke="#333" stroke-width="1.700"/><circle cx="3" cy="3" r="1.900" fill="none" stroke="#333" stroke-width="1.500"/><circle cx="10.500" cy="9" r="1.900" fill="none" stroke="#333" stroke-width="1.500"/></svg></span><span class="url">theautomationchallenge.com</span>
        <span class="trs"><svg viewBox="0 0 18 18"><path d="M1 1h8l4 13H2.500Q1 14 1 12.500z" fill="#4a4d51"/><path d="M10 4.500h5.500Q17 4.500 17 6v9.500q0 1.500-1.500 1.500H10l3-3" fill="none" stroke="#4a4d51" stroke-width="1.200"/><path d="M8 6A2.500 2.500 0 1 0 8.300 8H6.300" fill="none" stroke="#d0d3d8"/><path d="M11 8h5M13.500 7v1M15 8c-.5 2-2 3-3 4" fill="none" stroke="#4a4d51"/></svg></span>
        <svg class="star" viewBox="0 0 16 16"><path d="M8 1.500l1.900 4.200 4.600.5-3.400 3 1 4.500L8 11.400l-4.100 2.300 1-4.500-3.400-3 4.600-.5z" fill="none" stroke="#333" stroke-width="1.400"/></svg></div>
      <svg class="puz" viewBox="0 0 18 18"><path d="M2 4.500h4.500V3a2 2 0 0 1 3 0v1.500H14V8.500h1a1.500 1.500 0 0 1 0 3H14v5H2v-4h1.500a1.500 1.500 0 0 0 0-4H2z" fill="none" stroke="#444" stroke-width="1.800"/></svg>
      <span class="tsep"></span>
      <svg class="side" viewBox="0 0 16 16"><path d="M1.500 1.500h13v13h-13z" fill="none" stroke="#444" stroke-width="1.500"/><path d="M9 1h6v14H9z" fill="#444"/></svg>
      <span class="ava">B</span><span class="dots"><i></i><i></i><i></i></span>
    </div>
    <header class="site-head">
      <div class="brand"><span class="the">THE</span><span class="auto">AUTOMATION</span><span class="chal">CHALLENGE</span></div>
      <svg class="gears"><use href="#gears"/></svg>
      <span class="v">V1.0</span><span class="v vu">V2.0</span>
      <span class="n n1">Solution</span><span class="n n2">Leaderboard</span><span class="bo">BÖ</span><span class="n n3">Bedirhan</span>
    </header>
    <div class="page">
      <aside>
        <h1>Instructions:</h1>
        <p><strong>1. OBJECTIVE:</strong> Build an automated workflow that inputs all<br>excel data into the corresponding input fields on the web<br>page in the fastest possible time.</p>
        <p><strong>2. WARNING!</strong> The fields will change location, size, selector<br>and label position on the screen every time 'Submit' is clicked<br>for all 50 excel rows. Therefore, the automation must<br>accurately determine where each spreadsheet record must<br>be typed every time.</p>
        <p><strong>3. CHALLENGE ACCEPTED?</strong> Score 100% accuracy and earn a<br>Certificate of Completion and earn your place on the<br>leaderboard. The timer of the challenge will begin once you<br>click the Start button.</p>
        <p><strong class="ps">P.S.</strong> Beware of the random reCAPTCHA pop-up. Good luck!</p>
        <button class="dl"><svg viewBox="0 0 14 16"><path d="M1 .7h8.500L13.300 4.500V15.300H1zM9.300.8V4.700h4" fill="none" stroke="#333" stroke-width="1.100"/><path d="M4.500 7.500l5 5M9.500 7.500l-5 5M3.500 7.500h2M8.500 7.500h2M3.500 12.500h2M8.500 12.500h2" stroke="#333"/></svg>Download Excel Spreadsheet</button>
        <button class="start">Start</button>
      </aside>
      <form class="form">
        <div class="frow r1"><label>Company Name<input></label><label>Address<input></label></div>
        <div class="frow r2"><label>EIN<input></label><label>Sector<input></label></div>
        <div class="frow r3"><label>Automation Tool<input></label><label>Annual Saving<input></label></div>
        <div class="frow r4"><label>Date<input></label></div>
      </form>
    </div>
    <div class="popup">
      <div class="ptop"><span class="lang on">İngilizce</span><span class="lang tr">Türkçe</span><span class="dots"><i></i><i></i><i></i></span><svg class="px"><use href="#x"/></svg></div>
      <div class="pbot"><b>Google</b> Translate</div>
    </div>
  </div>
  <footer class="taskbar right">
    <span class="tb s"><svg class="w16"><use href="#win"/></svg></span><span class="tb s"><svg class="w22"><use href="#find"/></svg></span><span class="tb s tv"><svg class="w18"><use href="#task"/></svg></span>
    <span class="tb"><svg><use href="#npp"/></svg></span><span class="tb"><svg><use href="#blob"/></svg></span><span class="tb att"><svg viewBox="0 0 40 40"><use href="#stu"/></svg></span><span class="tb act"><svg viewBox="0 0 40 40"><use href="#chr"/></svg></span><span class="tb run"><svg viewBox="0 0 40 40"><use href="#rdp"/></svg></span><span class="tb"><svg><use href="#olk"/></svg></span><span class="tb run"><svg viewBox="0 0 40 40"><use href="#mm"/></svg></span><span class="tb run two"><svg><use href="#exp"/></svg></span><span class="tb run"><svg><use href="#asst"/></svg></span>
    <div class="tray"><span class="clock">13:52<br>23.02.2024</span></div>
  </footer>
</section>
</main>
</body>
</html>
```
FILE: styles.css
```css
* { box-sizing: border-box; }
body { margin: 0; overflow: hidden; font: 12px/16px "Open Sans", "Noto Sans", sans-serif; letter-spacing: -.38px; color: #000; }
svg { display: block; flex: none; overflow: visible; }
.defs { position: absolute; }
i, em { font-style: normal; }
u, s { text-decoration: none; }
.screens { display: flex; width: 3840px; height: 1080px; }
.monitor { width: 1920px; height: 1080px; display: flex; flex-direction: column; }

/* wallpaper */
.desktop { position: relative; height: 1040px;
  background:
    radial-gradient(ellipse 330px 420px at 1570px 410px, rgba(0,112,255,.85), rgba(0,100,245,.4) 45%, rgba(0,90,235,0)),
    radial-gradient(ellipse 1500px 900px at 100px 1000px, rgba(0,190,255,.75), rgba(0,180,250,.35) 50%, rgba(0,150,240,0)),
    linear-gradient(96deg, #009ff8 0, #009cf6 340px, #008cec 620px, #0073dc 900px, #005acc 1150px, #044bc2 1400px, #053ab4 1900px); }
.wall { position: absolute; left: 0; top: 0; width: 1920px; height: 1080px; }
.icons { position: relative; display: grid; grid-template: repeat(11, 92px) / 75px 76px; grid-auto-flow: column; width: 151px; }
.ico { display: flex; flex-direction: column; align-items: center; padding-top: 7px; }
.ico i { position: relative; width: 39px; height: 39px; }
.ico i svg { width: 39px; height: 39px; }
.ico i .sc { position: absolute; left: 0; bottom: 0; width: 10px; height: 10px; }
.ico b { margin-top: 3px; font-weight: 500; line-height: 15px; text-align: center; color: #fff; white-space: nowrap; letter-spacing: -.4px; text-shadow: 1px 1px 1px rgba(0,0,0,.9), 0 1px 2px rgba(0,0,0,.7); }

/* explorer */
.window { position: absolute; left: 445px; top: 216px; width: 1125px; height: 634px; border: 1px solid #2a6ea8; background: #fff; display: flex; flex-direction: column; box-shadow: 0 3px 12px rgba(0,0,0,.35); }
.f { width: 10px; height: 13px; }
.titlebar { height: 30px; display: flex; align-items: center; padding: 0 18px 0 9px; color: #999; }
.vsep { width: 1px; height: 13px; background: #8a8a8a; }
.s1 { margin-left: 12px; }
.chk { width: 12px; height: 14px; margin-left: 11px; }
.f2 { margin-left: 10px; }
.qa { width: 8px; height: 7px; margin-left: 10px; }
.s2 { margin-left: 8px; }
.wtitle { margin-left: 7px; letter-spacing: -.2px; }
.wc { width: 102px; height: 14px; margin-left: auto; }
.ribbon { height: 24px; border-bottom: 1px solid #dadada; display: flex; align-items: center; color: #333; }
.dosya { width: 56px; height: 23px; line-height: 23px; background: #0063b1; color: #fff; text-align: center; }
.t1 { margin-left: 14px; width: 52px; }
.t2 { width: 60px; }
.t3 { width: 60px; letter-spacing: -.7px; }
.rchev { width: 9px; height: 6px; margin-left: auto; color: #999; }
.help { width: 16px; height: 16px; margin: 0 3px 0 9px; border-radius: 50%; background: #0a68b8; color: #fff; font-weight: 700; text-align: center; }
.addr { height: 35px; display: flex; align-items: center; color: #666; }
.a1, .a2, .a4 { width: 13px; height: 11px; }
.a1 { margin-left: 12px; }
.a2 { margin-left: 17px; transform: scaleX(-1); color: #ccc; }
.a3 { width: 7px; height: 5px; margin-left: 14px; }
.a4 { margin-left: 11px; transform: rotate(90deg); }
.path { height: 22px; width: 886px; margin-left: 11px; border: 1px solid #d9d9d9; display: flex; align-items: center; padding-left: 4px; color: #666; }
.path span { color: #000; }
.path .ac { letter-spacing: -.2px; }
.pf { width: 10px; height: 13px; }
.sep { width: 7px; height: 5px; transform: rotate(-90deg); margin: 0 8px; }
.sep.p0 { margin-left: 10px; }
.pchev { width: 9px; height: 6px; margin-left: auto; margin-right: 3px; }
.path .ref { width: 16px; height: 20px; border-left: 1px solid #d9d9d9; display: flex; align-items: center; justify-content: center; }
.ref svg { width: 11px; height: 12px; }
.search { height: 22px; width: 108px; margin-left: 12px; border: 1px solid #d9d9d9; display: flex; align-items: center; justify-content: space-between; padding: 0 8px 0 5px; letter-spacing: -.25px; }
.search svg { width: 11px; height: 11px; }
.panes { flex: 1; display: flex; }
.tree { list-style: none; margin: 0; padding: 16px 2px 0 0; width: 156px; height: 520px; border-right: 1px solid #f0f0f0; overflow: hidden; }
.tree li { height: 24px; display: flex; align-items: center; padding-left: 25px; white-space: nowrap; position: relative; }
.tree li svg { width: 15px; height: 15px; margin-right: 5px; }
.tree li.k { padding-left: 32px; }
.tree li.k svg { margin-right: 6px; }
.tree li.k svg.f { width: 10px; height: 13px; margin: 0 9px 0 2px; }
.tree li.k svg.pin { width: 10px; height: 11px; margin: 0 2px 0 auto; }
.tree .g { margin-top: 8px; }
.tree .on { background: #d9d9d9; }
.files { padding-left: 15px; }
.cols { position: relative; display: flex; height: 25px; margin-bottom: 6px; line-height: 25px; color: #4c607a; }
.cols span { border-right: 1px solid #e5e5e5; }
.cols span:nth-child(1) { width: 258px; padding-left: 3px; }
.cols span:nth-child(2) { width: 144px; padding-left: 6px; }
.cols span:nth-child(3) { width: 120px; padding-left: 6px; }
.cols span:nth-child(4) { width: 80px; padding-left: 6px; }
.sort { position: absolute; left: 123px; top: 0; width: 8px; height: 5px; transform: scaleY(-1); color: #777; }
.row { display: flex; align-items: center; width: 598px; height: 21px; padding-left: 6px; }
.row .f { margin: 0 9px 0 1px; }
.row .d { width: 12px; height: 15px; margin-right: 7px; }
.row span { width: 239px; }
.row em { width: 145px; color: #6d6d6d; letter-spacing: -.72px; word-spacing: .4px; }
.row u { width: 120px; color: #6d6d6d; }
.row s { width: 65px; text-align: right; color: #6d6d6d; }
.row.on { background: #d9d9d9; }
.status { height: 23px; display: flex; align-items: center; color: #1e395b; }
.status span:nth-child(1) { width: 60px; padding-left: 14px; border-right: 1px solid #eee; }
.status span:nth-child(2) { width: 130px; padding-left: 10px; border-right: 1px solid #eee; white-space: nowrap; }
.v1 { width: 22px; height: 22px; margin-left: auto; }
.v2 { width: 14px; height: 12px; margin: 0 7px 0 4px; }

/* taskbar */
.taskbar { height: 40px; display: flex; background: #d1e6ee; }
.taskbar.left { background: linear-gradient(90deg, #d1e7ef, #d1e4ef 50%, #d4dcec 80%, #d4d8ea); }
.tb { position: relative; width: 49px; height: 40px; display: flex; align-items: center; justify-content: center; }
.tb svg { width: 24px; height: 24px; }
.tb.s { width: 48px; }
.tb.tv { width: 51px; padding-right: 3px; }
.tb svg.w16 { width: 16px; height: 16px; }
.tb svg.w22 { width: 22px; height: 22px; }
.tb svg.w18 { width: 17px; height: 16px; }
.hov { background: rgba(255,255,255,.45); background-clip: content-box; padding-right: 1px; }
.att { background: #f6b27d; background-clip: content-box; padding-right: 1px; }
.act { background: rgba(255,255,255,.7); background-clip: content-box; padding-right: 1px; }
.att::after, .act::after, .run::after { content: ""; position: absolute; left: 4px; right: 5px; bottom: 0; height: 2px; background: #0063b1; }
.att::after { left: 0; right: 1px; background: #ff7300; }
.act::after { left: 0; right: 1px; }
.two::after { background: linear-gradient(90deg, #0063b1 32px, #6aa3cf 32px); }
.tray { margin-left: auto; display: flex; align-items: center; font-size: 12px; }
.left .tray { margin-right: 4px; padding-right: 13px; border-right: 1px solid #a9b3c2; }
.wx { width: 22px; height: 22px; margin-right: 10px; }
.deg { width: 38px; font-size: 13px; }
.puslu { width: 57px; font-size: 13px; letter-spacing: -.1px; }
.up { width: 12px; height: 8px; margin-right: 11px; }
.net { width: 16px; height: 16px; margin-right: 7px; }
.spk { width: 15px; height: 14px; margin-right: 12px; }
.clock { width: 55px; text-align: center; line-height: 18px; letter-spacing: -.75px; white-space: nowrap; }
.right .clock { width: 62px; margin-right: 1px; }
.note { position: relative; margin-left: 15px; width: 24px; height: 24px; padding-top: 2px; }
.note svg { width: 18px; height: 17px; }
.note b { position: absolute; left: 8px; top: 9px; width: 16px; height: 16px; border: 1px solid #777; border-radius: 50%; background: #e3e3e6; font: 10px/14px "Open Sans", sans-serif; text-align: center; }

/* browser */
.browser { position: relative; height: 1040px; display: flex; flex-direction: column; background: #f5f5f5; }
.tabs { height: 48px; margin-bottom: -8px; background: #d3e2fb; display: flex; padding: 6px 18px 0 6px; }
.tsearch { width: 28px; height: 28px; border-radius: 10px; background: #ecf3fe; display: flex; align-items: center; justify-content: center; }
.tsearch svg { width: 9px; height: 6px; color: #222; }
.tab { position: relative; width: 232px; height: 34px; margin-left: 6px; background: #fff; border-radius: 10px 10px 0 0; display: flex; align-items: center; padding: 0 12px 4px 8px; letter-spacing: -.31px; color: #1f1f1f; }
.tab::before, .tab::after { content: ""; position: absolute; bottom: 0; width: 10px; height: 10px; }
.tab::before { left: -10px; background: radial-gradient(circle at 0 0, transparent 10px, #fff 10.500px); }
.tab::after { right: -10px; background: radial-gradient(circle at 100% 0, transparent 10px, #fff 10.500px); }
.fav { width: 16px; height: 12px; margin-right: 8px; }
.tx { width: 8px; height: 8px; margin-left: auto; color: #222; }
.plus { width: 10px; height: 10px; margin: 9px 0 0 15px; }
.bwc { width: 102px; height: 12px; margin: 8px 0 0 auto; }
.toolbar { position: relative; height: 47px; background: #fff; border-radius: 10px 10px 0 0; border-bottom: 1px solid #dedede; display: flex; align-items: center; }
.b1 { width: 13px; height: 12px; margin-left: 15px; color: #aaa; }
.b2 { transform: scaleX(-1); margin-left: 23px; }
.b3 { width: 13px; height: 14px; margin-left: 23px; }
.b4 { width: 14px; height: 16px; margin-left: 22px; }
.omni { width: 1590px; height: 34px; margin-left: 20px; border-radius: 17px; background: #eceff7; display: flex; align-items: center; padding-left: 5px; padding-right: 15px; }
.site { width: 24px; height: 24px; border-radius: 50%; background: #fff; display: flex; align-items: center; justify-content: center; }
.site svg { width: 13px; height: 11px; }
.url { margin-left: 8px; font-size: 14px; letter-spacing: -.43px; color: #1f1f1f; }
.trs { margin-left: auto; width: 24px; height: 24px; border-radius: 50%; background: #c9ccd3; display: flex; align-items: center; justify-content: center; }
.trs svg { width: 17px; height: 17px; }
.star { width: 17px; height: 17px; margin-left: 11px; }
.puz { width: 18px; height: 18px; margin-left: 18px; }
.tsep { width: 2px; height: 16px; margin-left: 16px; background: #d3e3fd; }
.side { width: 15px; height: 16px; margin-left: 18px; }
.ava { width: 20px; height: 20px; margin-left: 18px; border-radius: 50%; background: #3f5660; color: #fff; font: 700 11px/20px "Open Sans", sans-serif; text-align: center; }
.dots { display: flex; flex-direction: column; gap: 3px; margin-left: 24px; }
.dots i { width: 3px; height: 3px; border-radius: 50%; background: #444; }
.site-head { position: relative; height: 70px; background: #fff; display: flex; font-family: Roboto, sans-serif; box-shadow: 0 2px 4px rgba(0,0,0,.4); z-index: 1; }
.brand { position: relative; width: 430px; height: 31px; margin: 23px 0 0 20px; border-left: 3px solid #000; padding-left: 6px; display: flex; align-items: baseline; line-height: 23px; }
.brand::after { content: ""; position: absolute; left: 0; bottom: 0; width: 163px; height: 3px; background: #000; }
.brand span { white-space: nowrap; }
.the { width: 51px; font-size: 17px; letter-spacing: 3.700px; }
.auto, .chal { font-size: 23px; letter-spacing: 4.100px; color: #e2382c; }
.auto { width: 195px; }
.chal { letter-spacing: 3.550px; }
.gears { width: 38px; height: 28px; margin: 19px 0 0 0; }
.v { width: 33px; margin: 27px 0 0 23px; font-size: 19px; line-height: 24px; letter-spacing: -1px; font-weight: 300; color: #333; align-self: flex-start; white-space: nowrap; }
.v.vu { width: 38px; margin-left: 17px; letter-spacing: .2px; line-height: 20px; margin-top: 29px; border-bottom: 2px solid #333; height: 20px; }
.n { font-size: 14px; font-weight: 500; letter-spacing: 2px; line-height: 20px; margin-top: 26px; }
.n1 { margin-left: 522px; width: 103px; }
.n2 { width: 132px; }
.bo { width: 30px; height: 30px; margin-top: 22px; border-radius: 50%; background: #ffceb0; font-size: 18px; line-height: 30px; font-weight: 300; letter-spacing: -1.200px; text-align: center; }
.n3 { margin-left: 8px; }
.page { flex: 1; display: flex; font-family: Roboto, sans-serif; }
aside { width: 417px; height: 776px; background: #000; color: #f1f1f1; padding: 13px 20px 0; box-shadow: 1px 0 2px rgba(0,0,0,.15); font-size: 14px; line-height: 19.600px; letter-spacing: -.22px; }
h1 { margin: 0 0 21px; font-size: 24px; line-height: 28px; letter-spacing: 0; }
aside p { margin: 0 0 19.600px; white-space: nowrap; }
strong { letter-spacing: -.4px; color: #fff; }
.ps { letter-spacing: 0; }
button { display: flex; align-items: center; justify-content: center; width: 336px; margin: 0 0 0 20px; padding: 0; border: 0; border-radius: 5px; font-family: Roboto, sans-serif; font-size: 16px; }
.dl { height: 28px; background: #fff; border: 2px solid #767676; font-weight: 300; letter-spacing: -.14px; color: #000; }
.dl svg { width: 14px; height: 16px; margin-right: 7px; }
.start { height: 45px; margin-top: 15px; background: #1a8917; color: #fff; font-weight: 700; letter-spacing: 1.500px; }
.form { margin-left: 569px; padding-top: 19px; font-size: 16px; font-weight: 300; line-height: 22px; color: #333; letter-spacing: -.35px; }
.frow { display: flex; gap: 36px; height: 95px; }
.r2, .r3, .r4 { padding-left: 3px; }
.r2 { height: 96px; }
.r3 { height: 93px; }
.frow label { display: block; width: 173px; }
.r1 label:first-child { letter-spacing: -.5px; }
input { display: block; width: 173px; height: 41px; margin-top: 9px; border: 1px solid #dcdcdc; border-radius: 5px; background: #fff; }
.popup { position: absolute; left: 1447px; top: 81px; width: 299px; height: 104px; border: 1px solid #d5d5d5; border-radius: 11px; background: #fff; box-shadow: 0 2px 5px rgba(0,0,0,.3); z-index: 2; overflow: hidden; }
.ptop { height: 47px; border-bottom: 1px solid #d9d9d9; display: flex; align-items: center; padding-left: 15px; padding-bottom: 1px; color: #444; font-weight: 600; }
.lang { height: 32px; line-height: 24px; padding-top: 3px; }
.lang.on { width: 87px; border-bottom: 3px solid #2b6be4; color: #2b6be4; padding-left: 20px; letter-spacing: 0; height: 33px; margin-top: 4px; }
.lang.tr { width: 78px; border-bottom: 1px solid #d5d5d5; padding-left: 20px; margin-top: 3px; }
.ptop .dots { margin-left: 52px; }
.px { width: 9px; height: 9px; margin-left: 27px; color: #333; }
.pbot { height: 56px; background: #f0f0f0; padding: 17px 19px; font: 12px/20px "Open Sans", sans-serif; letter-spacing: -.35px; color: #5f6368; }
.pbot b { font-weight: 600; }
```
